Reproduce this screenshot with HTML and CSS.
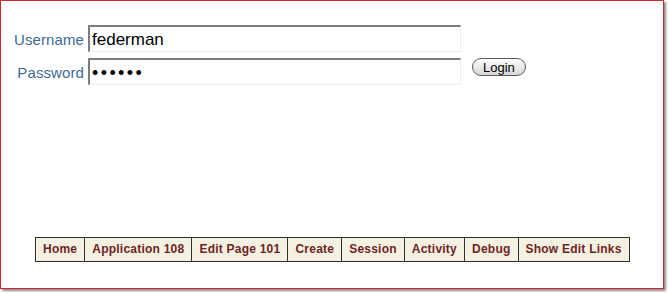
FILE: index.html
```html
<!DOCTYPE html>
<html>
<head>
<meta charset="utf-8">
<link rel="stylesheet" href="styles.css">
</head>
<body>
<div class="frame">
  <form class="login">
    <label class="lbl" for="u">Username</label>
    <input class="field" id="u" type="text" value="federman">
    <span></span>
    <label class="lbl" for="p">Password</label>
    <input class="field pw" id="p" type="password" value="secret">
    <button class="btn" type="button">Login</button>
  </form>
  <nav class="devbar">
    <a class="tab">Home</a>
    <a class="tab">Application 108</a>
    <a class="tab">Edit Page 101</a>
    <a class="tab">Create</a>
    <a class="tab">Session</a>
    <a class="tab">Activity</a>
    <a class="tab">Debug</a>
    <a class="tab">Show Edit Links</a>
  </nav>
</div>
</body>
</html>
```
FILE: styles.css
```css
html, body {
  margin: 0;
  padding: 0;
  background: #ffffff;
}
body {
  width: 668px;
  height: 293px;
  overflow: hidden;
  font-family: "Liberation Sans", Arial, sans-serif;
}
.frame {
  box-sizing: border-box;
  width: 664px;
  height: 289px;
  border: 1px solid #cf2a30;
  box-shadow: 2px 2px 2px rgba(0, 0, 0, 0.45);
  background: #fff;
  padding-top: 24px;
  display: flex;
  flex-direction: column;
}
.login {
  display: grid;
  grid-template-columns: 83px 373px auto;
  grid-template-rows: 27px 27px;
  column-gap: 4px;
  row-gap: 6px;
  margin: 0;
}
.lbl {
  justify-self: end;
  align-self: center;
  padding-top: 2px;
  font-size: 15px;
  color: #3e6a97;
  letter-spacing: 0.1px;
}
.field {
  box-sizing: border-box;
  width: 373px;
  height: 27px;
  margin: 0;
  padding: 2px 0 0 2px;
  border-style: solid;
  border-width: 2px 1px 1px 2px;
  border-color: #7d7d7d #ececec #ececec #7d7d7d;
  font-family: "Liberation Sans", Arial, sans-serif;
  font-size: 17px;
  color: #000;
  background: #fff;
  outline: none;
}
.pw {
  letter-spacing: 2.4px;
  font-size: 18px;
}
.btn {
  align-self: start;
  justify-self: start;
  margin: 0 0 0 7px;
  height: 18px;
  padding: 0 10px;
  border: 1px solid #5a5a5a;
  border-radius: 9px;
  background: linear-gradient(#ffffff, #d6d6d6);
  font-family: "Liberation Sans", Arial, sans-serif;
  font-size: 13px;
  line-height: 15px;
  color: #000;
}
.devbar {
  display: flex;
  align-self: flex-start;
  margin: 152px 0 0 34px;
  border: 1px solid #2e2e2e;
  background: #f5f1e2;
}
.tab {
  padding: 0 7px;
  line-height: 23px;
  font-size: 12px;
  font-weight: bold;
  letter-spacing: 0.23px;
  color: #6d2424;
  border-left: 1px solid #2e2e2e;
}
.tab:first-child {
  border-left: none;
}
```
